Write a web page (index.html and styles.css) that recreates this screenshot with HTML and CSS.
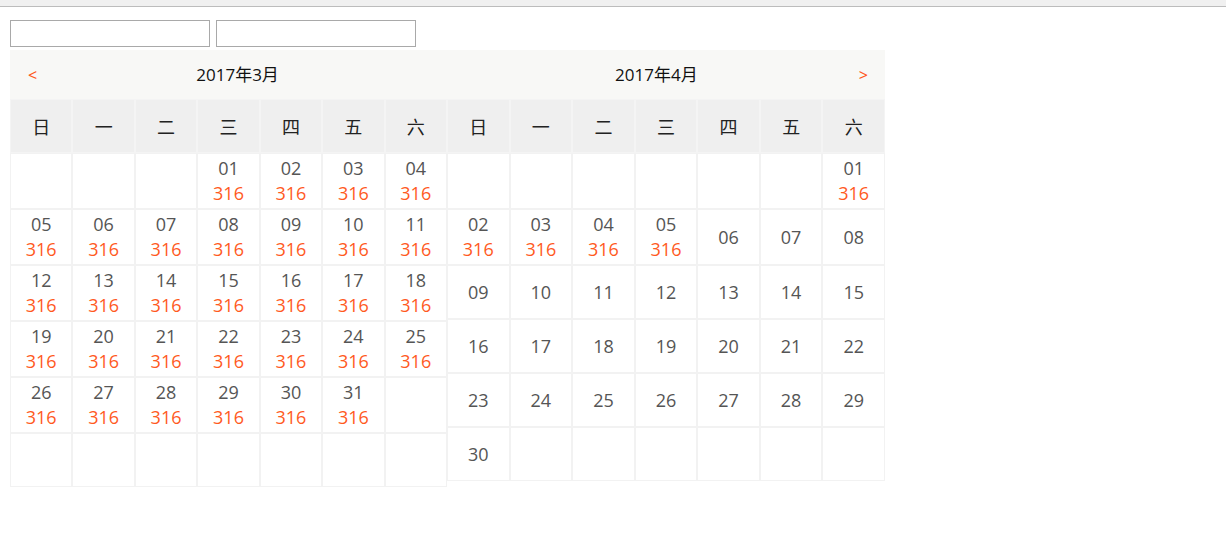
FILE: index.html
```html
<!DOCTYPE html>
<html lang="zh">
<head>
<meta charset="utf-8">
<title>日历</title>
<link rel="stylesheet" href="styles.css">
</head>
<body>
<div class="topbar"></div>
<div class="page">
  <div class="inputs">
    <input class="field" type="text">
    <input class="field" type="text">
  </div>
  <div class="calendar">
    <div class="month month-left">
      <div class="head">
        <span class="arrow">&lt;</span>
        <span class="title">2017年3月</span>
      </div>
      <div class="grid">
        <div class="wd">日</div><div class="wd">一</div><div class="wd">二</div><div class="wd">三</div><div class="wd">四</div><div class="wd">五</div><div class="wd">六</div>
        <div class="day"></div><div class="day"></div><div class="day"></div>
        <div class="day"><span class="num">01</span><span class="price">316</span></div>
        <div class="day"><span class="num">02</span><span class="price">316</span></div>
        <div class="day"><span class="num">03</span><span class="price">316</span></div>
        <div class="day"><span class="num">04</span><span class="price">316</span></div>
        <div class="day"><span class="num">05</span><span class="price">316</span></div>
        <div class="day"><span class="num">06</span><span class="price">316</span></div>
        <div class="day"><span class="num">07</span><span class="price">316</span></div>
        <div class="day"><span class="num">08</span><span class="price">316</span></div>
        <div class="day"><span class="num">09</span><span class="price">316</span></div>
        <div class="day"><span class="num">10</span><span class="price">316</span></div>
        <div class="day"><span class="num">11</span><span class="price">316</span></div>
        <div class="day"><span class="num">12</span><span class="price">316</span></div>
        <div class="day"><span class="num">13</span><span class="price">316</span></div>
        <div class="day"><span class="num">14</span><span class="price">316</span></div>
        <div class="day"><span class="num">15</span><span class="price">316</span></div>
        <div class="day"><span class="num">16</span><span class="price">316</span></div>
        <div class="day"><span class="num">17</span><span class="price">316</span></div>
        <div class="day"><span class="num">18</span><span class="price">316</span></div>
        <div class="day"><span class="num">19</span><span class="price">316</span></div>
        <div class="day"><span class="num">20</span><span class="price">316</span></div>
        <div class="day"><span class="num">21</span><span class="price">316</span></div>
        <div class="day"><span class="num">22</span><span class="price">316</span></div>
        <div class="day"><span class="num">23</span><span class="price">316</span></div>
        <div class="day"><span class="num">24</span><span class="price">316</span></div>
        <div class="day"><span class="num">25</span><span class="price">316</span></div>
        <div class="day"><span class="num">26</span><span class="price">316</span></div>
        <div class="day"><span class="num">27</span><span class="price">316</span></div>
        <div class="day"><span class="num">28</span><span class="price">316</span></div>
        <div class="day"><span class="num">29</span><span class="price">316</span></div>
        <div class="day"><span class="num">30</span><span class="price">316</span></div>
        <div class="day"><span class="num">31</span><span class="price">316</span></div>
        <div class="day"></div>
        <div class="day"></div><div class="day"></div><div class="day"></div><div class="day"></div><div class="day"></div><div class="day"></div><div class="day"></div>
      </div>
    </div>
    <div class="month month-right">
      <div class="head">
        <span class="title">2017年4月</span>
        <span class="arrow">&gt;</span>
      </div>
      <div class="grid">
        <div class="wd">日</div><div class="wd">一</div><div class="wd">二</div><div class="wd">三</div><div class="wd">四</div><div class="wd">五</div><div class="wd">六</div>
        <div class="day"></div><div class="day"></div><div class="day"></div><div class="day"></div><div class="day"></div><div class="day"></div>
        <div class="day"><span class="num">01</span><span class="price">316</span></div>
        <div class="day"><span class="num">02</span><span class="price">316</span></div>
        <div class="day"><span class="num">03</span><span class="price">316</span></div>
        <div class="day"><span class="num">04</span><span class="price">316</span></div>
        <div class="day"><span class="num">05</span><span class="price">316</span></div>
        <div class="day"><span class="num">06</span></div>
        <div class="day"><span class="num">07</span></div>
        <div class="day"><span class="num">08</span></div>
        <div class="day"><span class="num">09</span></div>
        <div class="day"><span class="num">10</span></div>
        <div class="day"><span class="num">11</span></div>
        <div class="day"><span class="num">12</span></div>
        <div class="day"><span class="num">13</span></div>
        <div class="day"><span class="num">14</span></div>
        <div class="day"><span class="num">15</span></div>
        <div class="day"><span class="num">16</span></div>
        <div class="day"><span class="num">17</span></div>
        <div class="day"><span class="num">18</span></div>
        <div class="day"><span class="num">19</span></div>
        <div class="day"><span class="num">20</span></div>
        <div class="day"><span class="num">21</span></div>
        <div class="day"><span class="num">22</span></div>
        <div class="day"><span class="num">23</span></div>
        <div class="day"><span class="num">24</span></div>
        <div class="day"><span class="num">25</span></div>
        <div class="day"><span class="num">26</span></div>
        <div class="day"><span class="num">27</span></div>
        <div class="day"><span class="num">28</span></div>
        <div class="day"><span class="num">29</span></div>
        <div class="day"><span class="num">30</span></div>
        <div class="day"></div><div class="day"></div><div class="day"></div><div class="day"></div><div class="day"></div><div class="day"></div>
      </div>
    </div>
  </div>
</div>
</body>
</html>
```

FILE: styles.css
```css
html, body {
  margin: 0;
  padding: 0;
  background: #fff;
}

body {
  font-family: "Open Sans", "Noto Sans CJK SC", sans-serif;
  color: #555;
}

.topbar {
  height: 6px;
  background: #f0f0f0;
  border-bottom: 1px solid #bcbcbc;
}

.page {
  padding: 13px 10px 0 10px;
}

.inputs {
  display: flex;
  gap: 6px;
  margin-bottom: 3px;
}

.field {
  box-sizing: border-box;
  width: 200px;
  height: 27px;
  margin: 0;
  padding: 0 4px;
  border: 1px solid #a9a9a9;
  border-radius: 0;
  background: #fff;
  outline: none;
}

.calendar {
  display: grid;
  grid-template-columns: 437px 438px;
  width: 875px;
  align-items: start;
}

.head {
  height: 49px;
  display: flex;
  align-items: center;
  background: #f8f8f6;
}

.month-left .head {
  padding: 0 9px 0 18px;
}

.month-right .head {
  padding: 0 17px 0 7px;
}

.arrow {
  font-family: "Noto Sans", sans-serif;
  font-size: 16px;
  line-height: 20px;
  color: #ff5a1e;
}

.title {
  flex: 1;
  text-align: center;
  font-size: 17px;
  line-height: 24px;
  color: #111;
}

.grid {
  display: grid;
  grid-template-columns: repeat(7, 1fr);
}

.wd {
  box-sizing: border-box;
  height: 54px;
  display: flex;
  align-items: center;
  justify-content: center;
  background: #efefef;
  border: 1px solid #f4f4f4;
  font-family: "Noto Sans CJK SC", sans-serif;
  font-size: 18px;
  color: #222;
}

.day {
  box-sizing: border-box;
  min-height: 54px;
  padding: 2px 0;
  display: flex;
  flex-direction: column;
  align-items: center;
  justify-content: center;
  border: 1px solid #f2f2f2;
  font-size: 18px;
  line-height: 25px;
}

.num {
  color: #555;
}

.price {
  color: #ff5a1e;
}
```
